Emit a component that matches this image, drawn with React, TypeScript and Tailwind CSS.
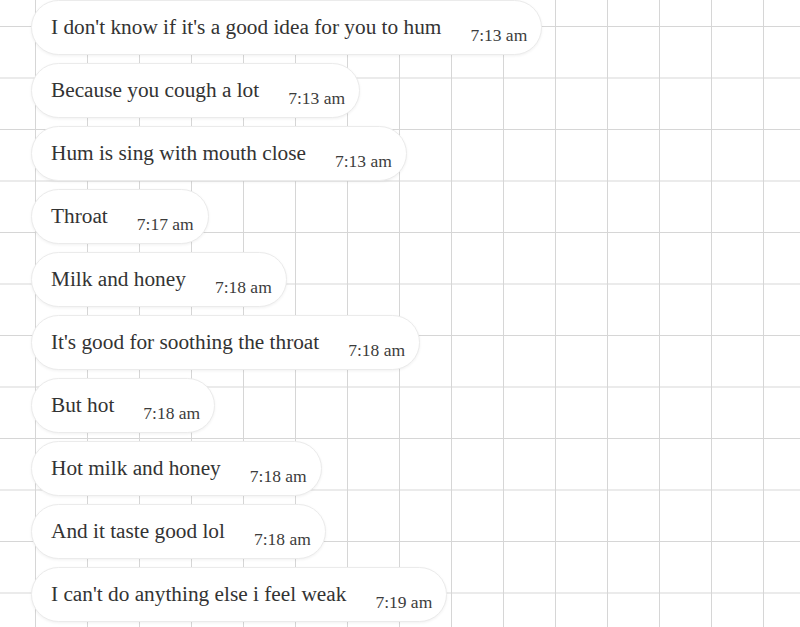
import React from "react";

type Msg = { text: string; time: string };

const messages: Msg[] = [
  { text: "I don't know if it's a good idea for you to hum", time: "7:13 am" },
  { text: "Because you cough a lot", time: "7:13 am" },
  { text: "Hum is sing with mouth close", time: "7:13 am" },
  { text: "Throat", time: "7:17 am" },
  { text: "Milk and honey", time: "7:18 am" },
  { text: "It's good for soothing the throat", time: "7:18 am" },
  { text: "But hot", time: "7:18 am" },
  { text: "Hot milk and honey", time: "7:18 am" },
  { text: "And it taste good lol", time: "7:18 am" },
  { text: "I can't do anything else i feel weak", time: "7:19 am" },
];

function Bubble({ text, time }: Msg) {
  return (
    <div className="flex h-[55px] w-fit items-start rounded-[28px] border border-[#ebebeb] bg-white pl-[19px] pr-[14px] pt-[13px] shadow-[0_1px_3px_rgba(0,0,0,0.06)]">
      <span className="text-[21.3px] leading-[26px] text-[#333333]">{text}</span>
      <span className="ml-[29px] mt-[11px] text-[17.5px] leading-[20px] text-[#3c3c3c]">{time}</span>
    </div>
  );
}

export default function App() {
  return (
    <div
      className="h-[627px] w-[800px] overflow-hidden bg-white bg-[linear-gradient(to_right,#d6d6d6_1px,transparent_1px),linear-gradient(to_bottom,#d6d6d6_1px,transparent_1px)] bg-[size:52px_51.5px] bg-[position:35px_26px] pl-[31px]"
      style={{ fontFamily: '"Liberation Serif", "DejaVu Serif", serif' }}
    >
      <div className="flex flex-col gap-2">
        {messages.map((m, i) => (
          <Bubble key={i} {...m} />
        ))}
      </div>
    </div>
  );
}
